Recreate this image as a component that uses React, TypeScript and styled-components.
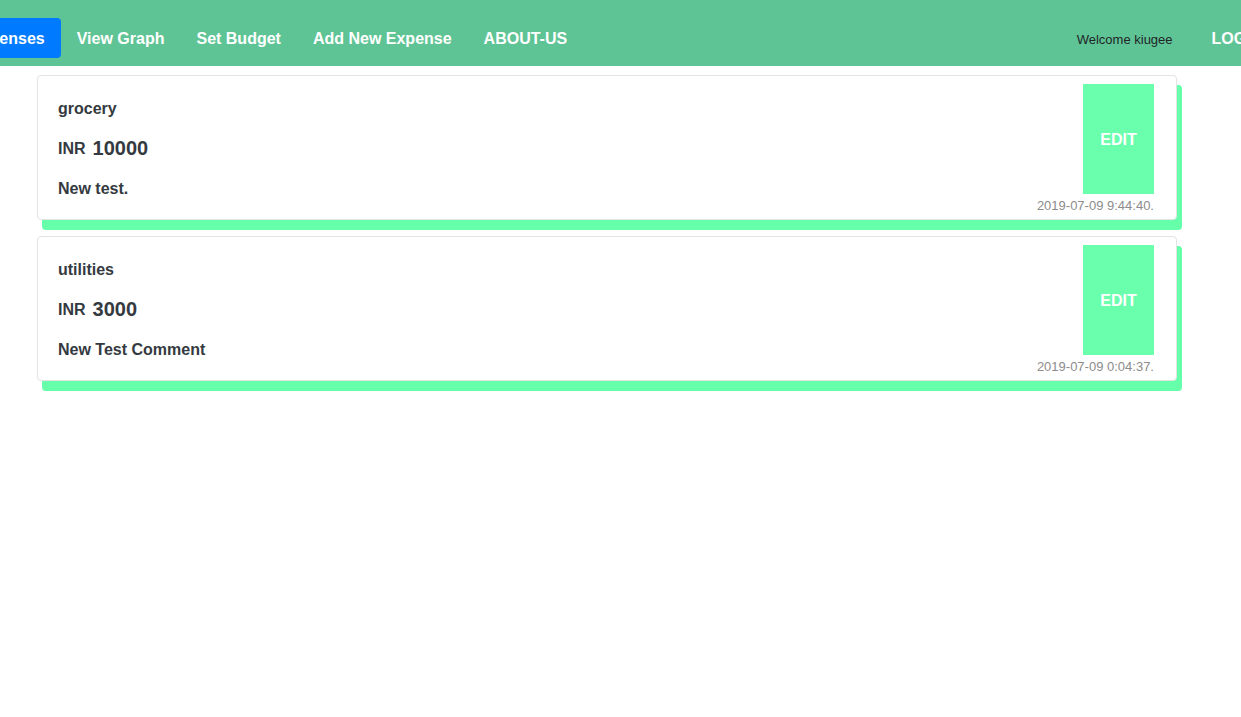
import React from "react";
import styled, { createGlobalStyle } from "styled-components";

const GlobalStyle = createGlobalStyle`
  html, body { margin: 0; padding: 0; background: #ffffff; }
  body { font-family: "Liberation Sans", Arial, sans-serif; color: #343a40; overflow-x: hidden; }
  * { box-sizing: border-box; }
`;

const NavBar = styled.nav`
  background: #5fc495;
  height: 66px;
  overflow: hidden;
`;

const NavRow = styled.div`
  display: flex;
  align-items: center;
  height: 100%;
  padding: 18px 0 8px;
  margin: 0 -55px 0 -46px;
`;

const NavLink = styled.a<{ $active?: boolean }>`
  flex: none;
  display: block;
  padding: 9px 16px 7px;
  line-height: 24px;
  font-size: 16px;
  font-weight: 700;
  color: #ffffff;
  text-decoration: none;
  border-radius: 4px;
  background: ${(p) => (p.$active ? "#007bff" : "transparent")};
`;

const RightGroup = styled.div`
  margin-left: auto;
  display: flex;
  align-items: center;
`;

const Welcome = styled.span`
  font-size: 13px;
  color: #212529;
  margin-right: 23px;
  padding-top: 3px;
`;

const List = styled.main`
  width: 1140px;
  margin: 9px 0 0 37px;
  padding-bottom: 20px;
  display: flex;
  flex-direction: column;
  gap: 16px;
`;

const Card = styled.section`
  display: flex;
  background: #ffffff;
  border: 1px solid #e3e3e3;
  border-radius: 4px;
  box-shadow: 5px 10px 0 #66ffaa;
`;

const Info = styled.div`
  flex: 1;
  padding: 21px 20px 18px;
  display: flex;
  flex-direction: column;
  gap: 16px;
`;

const Line = styled.div`
  font-size: 16px;
  font-weight: 700;
  line-height: 24px;
  height: 24px;
  color: #343a40;
`;

const Amount = styled.span`
  font-size: 20px;
  line-height: 1;
  margin-left: 7px;
  vertical-align: -1px;
`;

const Side = styled.div`
  display: flex;
  flex-direction: column;
  align-items: flex-end;
  padding: 8px 22px 0 0;
`;

const EditButton = styled.button`
  width: 71px;
  height: 110px;
  border: none;
  background: #69ffad;
  color: #ffffff;
  font-family: "Liberation Sans", Arial, sans-serif;
  font-size: 16px;
  font-weight: 700;
  padding: 2px 0 0;
  cursor: pointer;
`;

const DateText = styled.div`
  margin-top: 4px;
  font-size: 13px;
  line-height: 15px;
  color: #8c8c8c;
`;

const expenses = [
  { category: "grocery", amount: "10000", comment: "New test.", date: "2019-07-09 9:44:40." },
  { category: "utilities", amount: "3000", comment: "New Test Comment", date: "2019-07-09 0:04:37." },
];

export default function App() {
  return (
    <>
      <GlobalStyle />
      <NavBar>
        <NavRow>
          <NavLink $active>Expenses</NavLink>
          <NavLink>View Graph</NavLink>
          <NavLink>Set Budget</NavLink>
          <NavLink>Add New Expense</NavLink>
          <NavLink>ABOUT-US</NavLink>
          <RightGroup>
            <Welcome>Welcome kiugee</Welcome>
            <NavLink>LOGOUT</NavLink>
          </RightGroup>
        </NavRow>
      </NavBar>
      <List>
        {expenses.map((e) => (
          <Card key={e.category}>
            <Info>
              <Line>{e.category}</Line>
              <Line>
                INR<Amount>{e.amount}</Amount>
              </Line>
              <Line>{e.comment}</Line>
            </Info>
            <Side>
              <EditButton>EDIT</EditButton>
              <DateText>{e.date}</DateText>
            </Side>
          </Card>
        ))}
      </List>
    </>
  );
}
